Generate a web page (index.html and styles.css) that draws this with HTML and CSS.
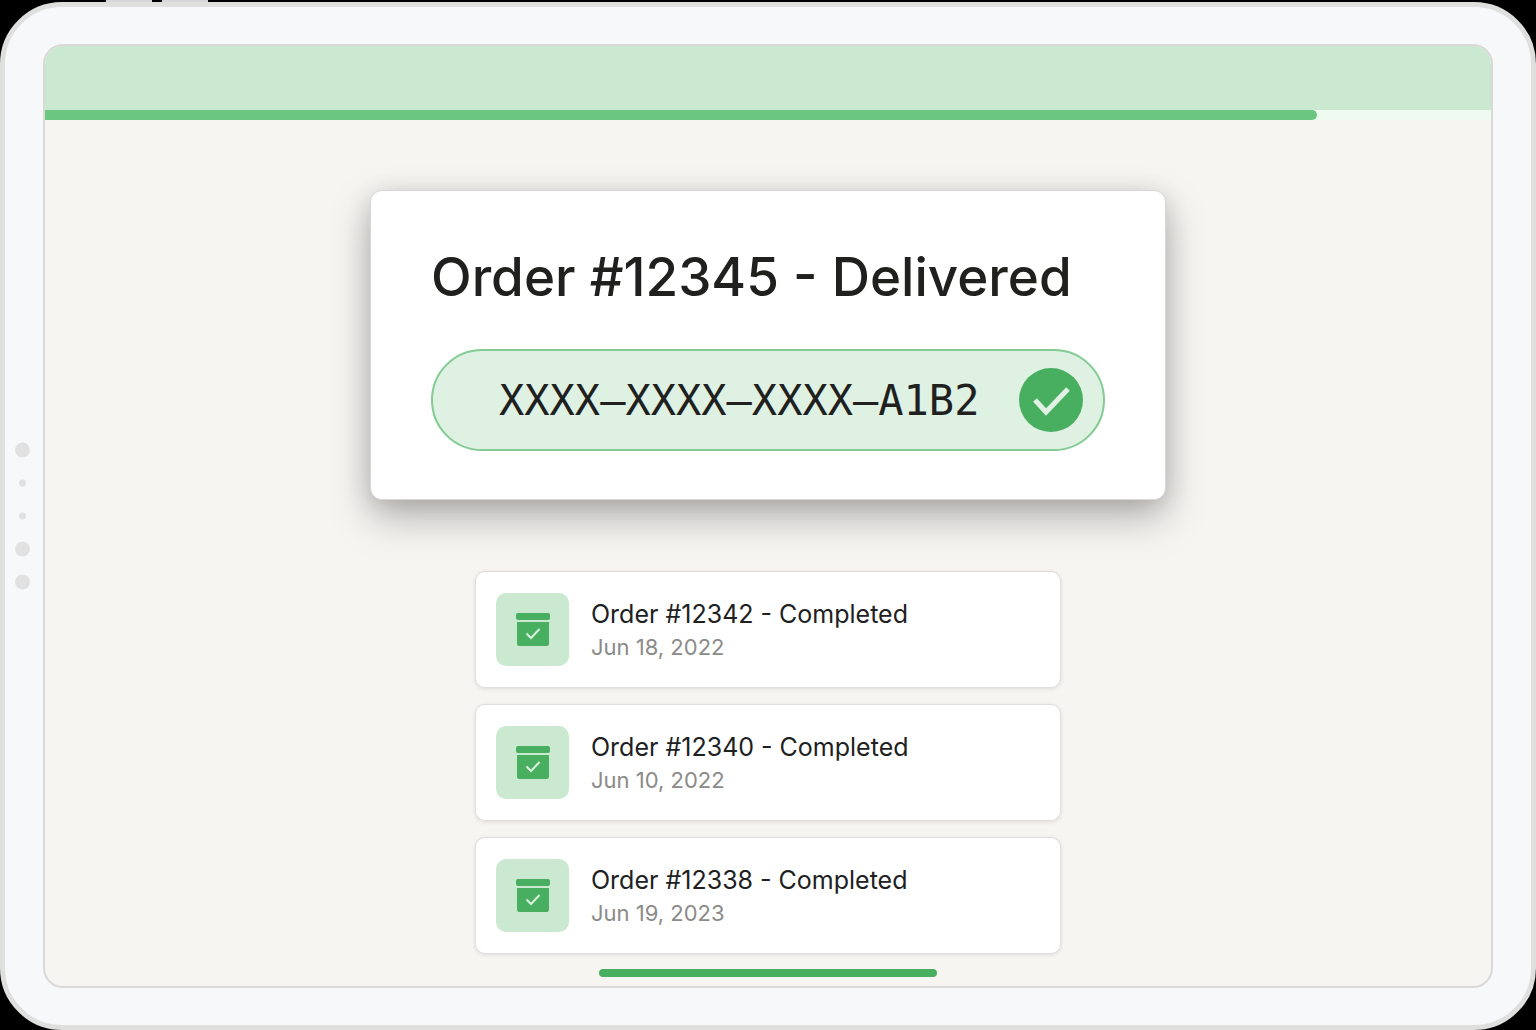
FILE: index.html
```html
<!DOCTYPE html>
<html lang="en">
<head>
  <meta charset="UTF-8" />
  <meta name="viewport" content="width=device-width, initial-scale=1.0"/>
  <title>Order Status</title>
  <link rel="stylesheet" href="styles.css">
</head>
<body>

  <!-- shared icon for the past orders -->
  <svg class="sprite" aria-hidden="true">
    <symbol id="archive" viewBox="0 0 34 34">
      <path fill="#49af60" d="M2 0h30a2 2 0 0 1 2 2v3a2 2 0 0 1-2 2H2a2 2 0 0 1-2-2V2a2 2 0 0 1 2-2z"/>
      <path fill="#49af60" d="M1 9h32v21.500a2.500 2.500 0 0 1-2.500 2.500h-27A2.500 2.500 0 0 1 1 30.500z"/>
      <path fill="none" stroke="#d9f0de" stroke-width="2" d="M10.500 20.500l4.500 4.500 8.500-9"/>
    </symbol>
  </svg>

  <div class="tablet">
    <span class="top-button first"></span>
    <span class="top-button second"></span>

    <!-- Sensors on the bezel -->
    <div class="sensors">
      <i class="dot"></i>
      <i class="dot small"></i>
      <i class="dot small"></i>
      <i class="dot"></i>
      <i class="dot"></i>
    </div>

    <div class="screen">
      <header class="top-bar"></header>
      <progress class="delivery-progress" value="88" max="100" aria-label="Delivery progress"></progress>

      <main class="content">
        <section class="order-card">
          <h1 class="order-title">Order #12345 - Delivered</h1>
          <div class="code-pill">
            <span class="code">XXXX–XXXX–XXXX–A1B2</span>
            <svg class="check" viewBox="0 0 64 64" aria-hidden="true">
              <circle cx="32" cy="32" r="32" fill="#49af60"/>
              <path fill="none" stroke="#e1f2e5" stroke-width="5" d="M16 32l11 12 22-23"/>
            </svg>
          </div>
        </section>

        <ul class="order-list">
          <li class="order-item">
            <div class="order-icon"><svg><use href="#archive"/></svg></div>
            <div>
              <div class="item-title">Order #12342 - Completed</div>
              <div class="item-date">Jun 18, 2022</div>
            </div>
          </li>
          <li class="order-item">
            <div class="order-icon"><svg><use href="#archive"/></svg></div>
            <div>
              <div class="item-title">Order #12340 - Completed</div>
              <div class="item-date">Jun 10, 2022</div>
            </div>
          </li>
          <li class="order-item">
            <div class="order-icon"><svg><use href="#archive"/></svg></div>
            <div>
              <div class="item-title">Order #12338 - Completed</div>
              <div class="item-date">Jun 19, 2023</div>
            </div>
          </li>
        </ul>
      </main>

      <div class="home-bar"></div>
    </div>
  </div>

</body>
</html>
```
FILE: styles.css
```css
* {
  box-sizing: border-box;
}

body {
  margin: 0;
  padding-top: 2px;
  background: #000;
  color: #20211f;
  font-family: Inter, sans-serif;
}

.sprite {
  display: none;
}

.tablet {
  position: relative;
  display: flex;
  min-height: calc(100vh - 2px);
  padding: 37px 38px;
  background: #f7f8fa;
  border: 5px solid #dfdfde;
  border-radius: 62px;
}

.top-button {
  position: absolute;
  top: -7px;
  width: 46px;
  height: 2px;
  background: #d6d6d6;
}

.top-button.first {
  left: 101px;
}

.top-button.second {
  left: 157px;
}

.sensors {
  position: absolute;
  top: 50%;
  left: 10px;
  transform: translateY(-50%);
  display: grid;
  grid-auto-rows: 33px;
  place-items: center;
}

.dot {
  width: 15px;
  height: 15px;
  background: #e1e1e1;
  border-radius: 50%;
}

.dot.small {
  width: 7px;
  height: 7px;
}

.screen {
  flex: 1;
  display: flex;
  flex-direction: column;
  background: #f6f5f2;
  border: 2px solid #dad9d8;
  border-radius: 20px;
  overflow: hidden;
}

.top-bar {
  height: 64px;
  background: #cbe9d1;
}

.delivery-progress {
  appearance: none;
  display: block;
  width: 100%;
  height: 10px;
  border: none;
  background: #effaf1;
}

.delivery-progress::-webkit-progress-bar {
  background: #effaf1;
}

.delivery-progress::-webkit-progress-value {
  background: #6bc681;
  border-radius: 0 5px 5px 0;
}

.content {
  flex: 1;
  display: flex;
  flex-direction: column;
  align-items: center;
  padding: 70px 20px 0;
}

.order-card {
  width: 100%;
  max-width: 796px;
  padding: 48px 60px;
  background: #fff;
  border: 1px solid #d8d8d6;
  border-radius: 12px;
  box-shadow: 0 18px 40px rgba(0,0,0,0.26), 0 4px 24px rgba(0,0,0,0.12);
}

.order-title {
  margin: 0 0 34px;
  font-size: 53px;
  font-weight: 500;
  line-height: 76px;
}

.code-pill {
  display: flex;
  align-items: center;
  justify-content: space-between;
  padding: 17px 20px 17px 66px;
  background: #def1e2;
  border: 2px solid #82cb93;
  border-radius: 51px;
}

.code {
  font-family: "DejaVu Sans Mono", monospace;
  font-size: 42px;
}

.check {
  width: 64px;
  height: 64px;
}

.order-list {
  display: flex;
  flex-direction: column;
  gap: 16px;
  width: 100%;
  max-width: 586px;
  margin: 71px 0 0;
  padding: 0;
  list-style: none;
}

.order-item {
  display: flex;
  align-items: center;
  gap: 22px;
  padding: 21px 20px;
  background: #fff;
  border: 1px solid #dfdedc;
  border-radius: 10px;
  box-shadow: 0 1px 4px rgba(0,0,0,0.1);
}

.order-icon {
  display: grid;
  place-items: center;
  width: 73px;
  height: 73px;
  background: #cbe9d1;
  border-radius: 10px;
}

.order-icon svg {
  width: 34px;
  height: 34px;
}

.item-title {
  font-size: 25px;
  line-height: 34px;
}

.item-date {
  color: #8b8b89;
  font-size: 22px;
  line-height: 32px;
}

.home-bar {
  width: 338px;
  height: 8px;
  margin: 14px auto 9px;
  background: #49af60;
  border-radius: 4px;
}
```
